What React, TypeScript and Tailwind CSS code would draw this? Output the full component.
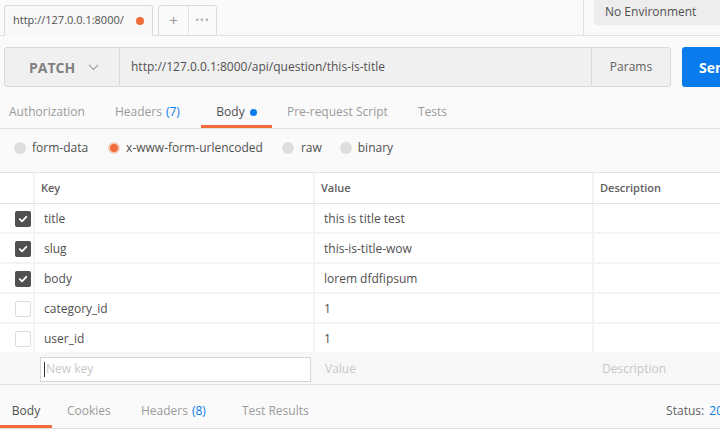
import React from 'react';

const rows = [
  { key: 'title', value: 'this is title test', on: true },
  { key: 'slug', value: 'this-is-title-wow', on: true },
  { key: 'body', value: 'lorem dfdfipsum', on: true },
  { key: 'category_id', value: '1', on: false },
  { key: 'user_id', value: '1', on: false },
];

const Check = ({ on }: { on: boolean }) =>
  on ? (
    <div className="w-4 h-4 rounded-[2px] bg-[#505050] flex items-center justify-center">
      <svg width="10" height="10" viewBox="0 0 10 10" fill="none">
        <path d="M1.8 5.2 L4 7.3 L8.3 2.8" stroke="white" strokeWidth="1.8" strokeLinecap="round" strokeLinejoin="round" />
      </svg>
    </div>
  ) : (
    <div className="w-4 h-4 rounded-[2px] border border-[#dcdcdc] bg-white" />
  );

const Radio = ({ on }: { on?: boolean }) => (
  <div
    className={
      'w-3 h-3 rounded-full ' +
      (on ? 'bg-[#f26b3a] border-2 border-[#f5cdbd]' : 'bg-[#dedede]')
    }
  />
);

export default function App() {
  return (
    <div className="w-[720px] h-[438px] overflow-hidden bg-[#fafafa] font-['Open_Sans',sans-serif] text-[12px] text-[#505050]">
      {/* top bar */}
      <div className="h-9 flex items-end border-b border-[#e0e0e0]">
        <div className="ml-1 w-[149px] h-[31px] -mb-px bg-[#f8f8f8] border border-[#dcdcdc] border-b-[#f8f8f8] rounded-t-[3px] flex items-center pl-2 pr-[8px] justify-between">
          <span className="text-[11px]">http://127.0.0.1:8000/</span>
          <span className="w-2 h-2 rounded-full bg-[#f26b3a]" />
        </div>
        <div className="ml-[5px] w-[59px] h-[31px] -mb-px bg-[#fafafa] border border-[#dcdcdc] rounded-t-[3px] flex">
          <div className="w-[30px] flex items-center justify-center border-r border-[#e3e3e3] text-[#999] text-[15px]">+</div>
          <div className="flex-1 flex items-center justify-center text-[#aaa] text-[10px] tracking-[1px]">•••</div>
        </div>
        <div className="ml-auto self-stretch flex">
          <div className="border-l border-[#e0e0e0] w-[11px]" />
          <div className="w-[126px] h-[25px] bg-[#ededed] rounded-bl-[3px] pl-[11px] pb-[2px] flex items-center">No Environment</div>
        </div>
      </div>

      {/* request bar */}
      <div className="flex mt-[11px] ml-1 h-10">
        <div className="w-[116px] bg-[#f0f0f0] border border-[#dadada] rounded-l-[3px] flex items-center pl-[24px] gap-[13px]">
          <span className="font-bold text-[14px] text-[#808080]">PATCH</span>
          <svg width="11" height="7" viewBox="0 0 11 7" fill="none">
            <path d="M1 1 L5.5 5.5 L10 1" stroke="#aaa" strokeWidth="1.3" />
          </svg>
        </div>
        <div className="w-[471px] bg-[#f0f0f0] border-y border-[#dadada] flex items-center pl-[11px]">
          http://127.0.0.1:8000/api/question/this-is-title
        </div>
        <div className="w-[80px] bg-[#f0f0f0] border border-[#dadada] rounded-r-[3px] flex items-center justify-center text-[#606060]">
          Params
        </div>
        <div className="ml-[11px] flex-1 bg-[#097bed] rounded-l-[3px] flex items-center pl-[17px] text-white font-bold text-[14px] whitespace-nowrap overflow-hidden">
          Send
        </div>
      </div>

      {/* request tabs */}
      <div className="h-[42px] border-b border-[#e0e0e0] flex items-stretch text-[12px] text-[#9a9a9a]">
        <div className="pl-[9px] w-[115px] flex items-center pt-[12px] border-b-[3px] border-transparent">Authorization</div>
        <div className="w-[86px] flex items-center pt-[12px] border-b-[3px] border-transparent">
          Headers <span className="ml-1 text-[#097bed]">(7)</span>
        </div>
        <div className="w-[71px] flex items-center justify-center text-[#505050] border-b-[3px] border-[#f26b3a] pt-[12px]">
          Body <span className="ml-[5px] w-[7px] h-[7px] rounded-full bg-[#097bed]" />
        </div>
        <div className="ml-[15px] w-[131px] flex items-center pt-[12px] border-b-[3px] border-transparent">Pre-request Script</div>
        <div className="flex items-center pt-[12px] border-b-[3px] border-transparent">Tests</div>
      </div>

      {/* body type */}
      <div className="h-[43px] flex items-center pb-[6px] pl-[14px] text-[12px] text-[#505050]">
        <Radio />
        <span className="ml-[6px]">form-data</span>
        <div className="ml-[20px]"><Radio on /></div>
        <span className="ml-[6px]">x-www-form-urlencoded</span>
        <div className="ml-[19px]"><Radio /></div>
        <span className="ml-[7px]">raw</span>
        <div className="ml-[18px]"><Radio /></div>
        <span className="ml-[6px]">binary</span>
      </div>

      {/* table */}
      <div className="border-t border-[#e2e2e2] bg-white">
        <div className="flex h-[31px] border-b border-[#e2e2e2] text-[11px] font-semibold text-[#606060]">
          <div className="w-[35px] border-r-2 border-[#f4f4f4]" />
          <div className="w-[280px] border-r-2 border-[#f4f4f4] flex items-center pl-[6px]">Key</div>
          <div className="w-[279px] border-r-2 border-[#f4f4f4] flex items-center pl-[6px]">Value</div>
          <div className="flex-1 flex items-center pl-[6px]">Description</div>
        </div>
        {rows.map((r) => (
          <div key={r.key} className="flex h-[30px] border-b-2 border-[#f4f4f4] text-[12px] text-[#505050]">
            <div className="w-[35px] border-r-2 border-[#f4f4f4] flex items-center pt-[2px] pl-[15px]">
              <Check on={r.on} />
            </div>
            <div className="w-[280px] border-r-2 border-[#f4f4f4] flex items-center pt-[2px] pl-[9px]">{r.key}</div>
            <div className="w-[279px] border-r-2 border-[#f4f4f4] flex items-center pt-[2px] pl-[9px]">{r.value}</div>
            <div className="flex-1" />
          </div>
        ))}
        <div className="flex h-[32px] -mt-[2px] bg-[#f7f7f7] items-center pt-[2px] text-[12px] text-[#c8c8c8]">
          <div className="ml-[40px] w-[271px] h-[25px] bg-white border border-[#d6d6d6] flex items-center pl-[3px]">
            <span className="w-px h-[15px] bg-[#333] mr-[1px]" />
            New key
          </div>
          <div className="ml-[14px] w-[277px]">Value</div>
          <div>Description</div>
        </div>
      </div>

      {/* response tabs */}
      <div className="h-[45px] border-y border-[#e0e0e0] flex items-stretch text-[12px] text-[#9a9a9a] bg-[#fafafa]">
        <div className="w-[52px] flex items-center justify-center text-[#505050] border-b-[3px] border-[#f26b3a] pt-[11px]">Body</div>
        <div className="ml-[15px] w-[74px] flex items-center pt-[11px] border-b-[3px] border-transparent">Cookies</div>
        <div className="w-[101px] flex items-center pt-[11px] border-b-[3px] border-transparent">
          Headers <span className="ml-1 text-[#097bed]">(8)</span>
        </div>
        <div className="flex items-center pt-[11px] border-b-[3px] border-transparent">Test Results</div>
        <div className="ml-auto -mr-[3px] flex items-center pt-[11px] border-b-[3px] border-transparent text-[#606060] whitespace-nowrap">
          Status:&nbsp;<span className="ml-[2px] text-[#097bed]">20</span>
        </div>
      </div>
      <div className="h-[10px] bg-white" />
    </div>
  );
}
